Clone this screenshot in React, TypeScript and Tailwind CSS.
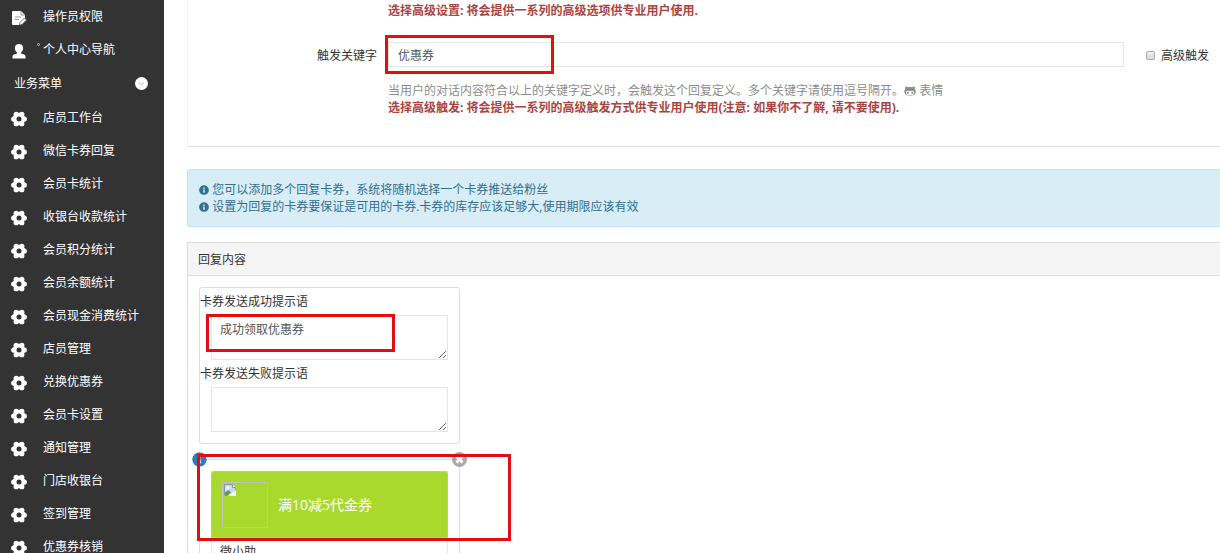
import type { ReactNode } from "react";
import { FaGithubAlt, FaInfoCircle } from "react-icons/fa";

const menu = [
  "店员工作台",
  "微信卡券回复",
  "会员卡统计",
  "收银台收款统计",
  "会员积分统计",
  "会员余额统计",
  "会员现金消费统计",
  "店员管理",
  "兑换优惠券",
  "会员卡设置",
  "通知管理",
  "门店收银台",
  "签到管理",
  "优惠券核销",
];

export default function App() {
  return (
    <div className="flex h-screen overflow-hidden bg-white font-['Open_Sans','Noto_Sans_CJK_SC',sans-serif] text-xs leading-[17px] text-[#333]">
      <Sidebar />
      <main className="ml-[23px] min-w-0 flex-1">
        <KeywordPanel />
        <div className="mt-[22px] rounded-l-[3px] border border-r-0 border-[#bce8f1] bg-[#d9edf7] px-[11px] py-[11px] text-[#31708f]">
          <Notice>您可以添加多个回复卡券，系统将随机选择一个卡券推送给粉丝</Notice>
          <Notice>设置为回复的卡券要保证是可用的卡券.卡券的库存应该足够大,使用期限应该有效</Notice>
        </div>
        <section className="mt-[15px] border border-r-0 border-[#ddd]">
          <h2 className="border-b border-[#ddd] bg-[#f5f5f5] px-[10px] pt-2 pb-[7px]">回复内容</h2>
          <div className="flex flex-col items-start gap-[15px] p-[11px]">
            <ReplyTips />
            <CouponCard />
          </div>
        </section>
      </main>
    </div>
  );
}

function Sidebar() {
  return (
    <nav className="w-[164px] shrink-0 overflow-hidden bg-[#333] text-white">
      <MenuItem icon={<DocIcon />} label="操作员权限" />
      <MenuItem icon={<UserIcon />} label="个人中心导航" mark />
      <button className="flex h-[35px] w-full items-center justify-between pr-4 pl-[14px]">
        业务菜单
        <svg viewBox="0 0 14 14" className="size-[13px]">
          <circle cx="7" cy="7" r="7" fill="#fff" />
          <path d="M4.5 6 7 8.3 9.5 6" fill="none" stroke="#aaa" />
        </svg>
      </button>
      {menu.map((label) => (
        <MenuItem key={label} icon={<GearIcon />} label={label} />
      ))}
    </nav>
  );
}

function MenuItem({ icon, label, mark }: { icon: ReactNode; label: string; mark?: boolean }) {
  return (
    <a href="#" className="relative flex h-[33px] items-center gap-4 pl-[11px]">
      <span className="pt-[2px]">{icon}</span>
      {mark && <span className="absolute top-[10px] left-[37px] size-[3px] rounded-full border border-[#bbb]" />}
      {label}
    </a>
  );
}

function KeywordPanel() {
  return (
    <section className="border-b border-l border-b-[#ddd] border-l-[#f2f2f2] pt-[2px] pb-[30px]">
      <p className="pl-[200px] font-bold text-[#a94442]">
        选择高级设置: 将会提供一系列的高级选项供专业用户使用.
      </p>
      <div className="mt-[23px] flex items-center">
        <label htmlFor="keyword" className="w-[189px] shrink-0 pt-[2px] text-right">
          触发关键字
        </label>
        <div className="relative ml-[11px] flex-1">
          <input
            id="keyword"
            defaultValue="优惠券"
            className="block h-[25px] w-full border border-[#e5e5e5] px-[9px] text-[#555] outline-none"
          />
          <Highlight className="-top-[7px] -left-[3px] h-[39px] w-[169px]" />
        </div>
        <label className="ml-[22px] flex items-center gap-[6px] pt-[2px] pr-[11px]">
          <input
            type="checkbox"
            className="size-[9px] appearance-none rounded-[2px] border border-[#aaa] bg-linear-to-b from-[#eee] to-[#d8d8d8]"
          />
          高级触发
        </label>
      </div>
      <div className="mt-[15px] pl-[200px]">
        <p className="text-[#8c8c8c]">
          当用户的对话内容符合以上的关键字定义时，会触发这个回复定义。多个关键字请使用逗号隔开。
          <a href="#">
            <FaGithubAlt className="inline size-3 align-[-2px]" /> 表情
          </a>
        </p>
        <p className="font-bold text-[#a94442]">
          选择高级触发: 将会提供一系列的高级触发方式供专业用户使用(注意: 如果你不了解, 请不要使用).
        </p>
      </div>
    </section>
  );
}

function Notice({ children }: { children: ReactNode }) {
  return (
    <p>
      <FaInfoCircle className="inline size-[10px] align-[-1px]" /> {children}
    </p>
  );
}

function ReplyTips() {
  return (
    <div className="relative w-[261px] rounded-[3px] border border-[#ddd] pt-[5px] pb-[11px]">
      <label htmlFor="success" className="block">
        卡券发送成功提示语
      </label>
      <textarea
        id="success"
        defaultValue="成功领取优惠券"
        className="mx-[11px] mt-[5px] block h-[45px] w-[237px] border border-[#e5e5e5] px-2 py-[5px] text-[#555] outline-none"
      />
      <label htmlFor="fail" className="mt-[5px] block">
        卡券发送失败提示语
      </label>
      <textarea
        id="fail"
        className="mx-[11px] mt-[5px] block h-[45px] w-[237px] border border-[#e5e5e5] px-2 py-[5px] text-[#555] outline-none"
      />
      <Highlight className="top-[26px] left-[6px] h-[38px] w-[189px]" />
    </div>
  );
}

function CouponCard() {
  return (
    <div className="relative w-[261px] rounded-[3px] border border-[#ddd] px-[11px] pt-[11px]">
      <FaInfoCircle className="absolute -top-2 -left-2 size-[15px] rounded-full bg-white text-[#337ab7]" />
      <button aria-label="删除" className="absolute -top-2 -right-2">
        <svg viewBox="0 0 15 15" className="size-[15px]">
          <circle cx="7.5" cy="7.5" r="7.5" fill="#aaa" />
          <path d="m4.5 4.5 6 6m0-6-6 6" stroke="#fff" strokeWidth="3" />
        </svg>
      </button>
      <div className="border border-[#e5e5e5]">
        <div className="-mx-px -mt-px flex h-[67px] items-center gap-[10px] rounded-t-[3px] border border-[#b5d94a] bg-[#a9d92d] px-[10px] text-sm text-white">
          <span className="size-[46px] border border-[#c0c0c0]">
            <BrokenImage />
          </span>
          满10减5代金券
        </div>
        <p className="px-2 pt-[5px] pb-3">微小助</p>
      </div>
      <Highlight className="-top-[6px] -left-[3px] h-[87px] w-[314px]" />
    </div>
  );
}

function Highlight({ className }: { className: string }) {
  return <span className={`pointer-events-none absolute border-3 border-[#e01010] ${className}`} />;
}

function GearIcon() {
  return (
    <svg viewBox="0 0 16 16" className="size-4">
      <g fill="#fff">
        <circle cx="8" cy="8" r="6.2" />
        <circle cx="5.2" cy="3.3" r="2.6" />
        <circle cx="10.8" cy="3.3" r="2.6" />
        <circle cx="13.3" cy="8" r="2.6" />
        <circle cx="10.8" cy="12.7" r="2.6" />
        <circle cx="5.2" cy="12.7" r="2.6" />
        <circle cx="2.7" cy="8" r="2.6" />
      </g>
      <circle cx="8" cy="8" r="2.5" fill="#333" />
    </svg>
  );
}

function DocIcon() {
  return (
    <svg viewBox="0 0 16 16" className="size-4">
      <path d="M2 1h8l4 4v4l-4 6H2a1 1 0 0 1-1-1V2a1 1 0 0 1 1-1Z" fill="#fff" />
      <path d="M10 1v4h4M4 7h6M4 9.5h4" fill="none" stroke="#999" />
      <path d="m8.500 15 .5-2.500L13.500 8l2 2-4.500 4.500Z" fill="#fff" stroke="#555" strokeWidth=".8" />
    </svg>
  );
}

function UserIcon() {
  return (
    <svg viewBox="0 0 16 16" className="size-4" fill="#fff">
      <path d="M8 1C5.500 1 3.900 2.600 3.900 5c0 2 .9 3.600 2.100 4.400v1C3.700 11 1.500 11.600 1.500 13.400V15.500h13v-2.100c0-1.800-2.200-2.400-4.500-3v-1C11.200 8.600 12.100 7 12.100 5 12.100 2.600 10.500 1 8 1Z" />
    </svg>
  );
}

function BrokenImage() {
  return (
    <svg viewBox="0 0 14 14" className="size-[14px]">
      <path d="M1.500 1.500h8l3 3v8h-11Z" fill="#c9d8f5" stroke="#8f9aa8" />
      <path d="M9.500 1.500v3h3" fill="#fff" stroke="#8f9aa8" />
      <circle cx="5" cy="4.800" r="1.500" fill="#fff" />
      <path d="M2 12V9.500L5.500 7 8 9.500 5 12Z" fill="#4ea53c" />
      <path d="m5 13 8-6v6Z" fill="#f4f6fb" />
    </svg>
  );
}
